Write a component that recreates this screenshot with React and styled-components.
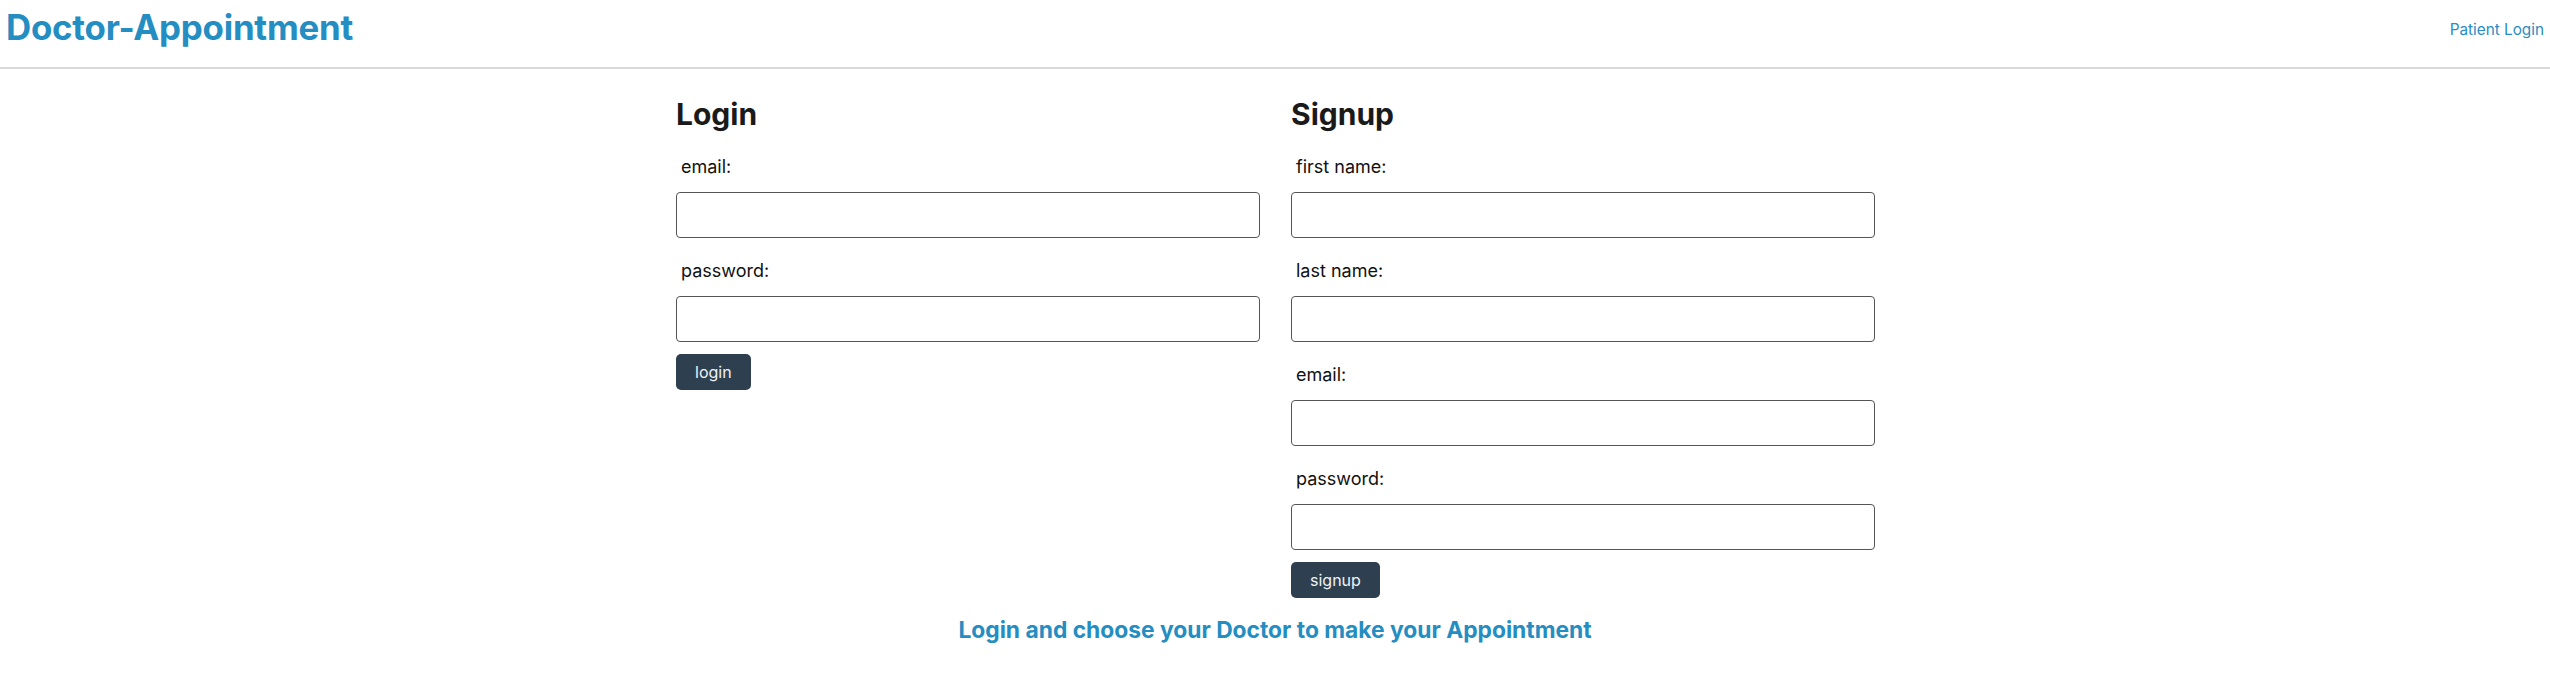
import styled, { createGlobalStyle } from "styled-components";

const GlobalStyle = createGlobalStyle`
    body{
        margin:0;
        font-family: Inter, "Noto Sans", sans-serif;
        color:#1b1b1b;
        background:#ffffff;
    }
    *{ box-sizing:border-box; }
`

const Header = styled.header`
    height:69px;
    display:flex;
    justify-content:space-between;
    align-items:flex-start;
    padding:0 6px 0 6px;
    border-bottom:2px solid #d9d9d9;
`

const Brand = styled.h1`
    margin:0;
    padding-top:7px;
    font-size:34.8px;
    line-height:40px;
    font-weight:700;
    color:#248dc1;
    letter-spacing:-0.2px;
`

const NavLink = styled.a`
    margin-top:20px;
    font-size:15.3px;
    line-height:20px;
    color:#2a8cc4;
    text-decoration:none;
    cursor:pointer;
`

const Main = styled.main`
    width:1230px;
    margin:0 auto;
    display:grid;
    grid-template-columns:1fr 1fr;
    padding-top:27px;
`

const Column = styled.section`
    padding-left:16px;
`

const Title = styled.h2`
    margin:0 0 24px;
    font-size:30px;
    line-height:36px;
    font-weight:700;
    color:#1a1a1a;
`

const Field = styled.div`
    margin-bottom:${props => props.last ? "12px" : "22px"};
`

const Label = styled.label`
    display:block;
    margin:0 0 14px 5px;
    font-size:18px;
    line-height:22px;
    color:#111;
`

const Input = styled.input`
    display:block;
    width:584px;
    height:46px;
    border:1px solid #555;
    border-radius:4px;
    padding:0 10px;
    font-size:16px;
    font-family:inherit;
    background:#fff;
`

const Button = styled.button`
    height:36px;
    padding:0 19px;
    border:none;
    border-radius:5px;
    background:#2e4050;
    color:#eef2f5;
    font-family:inherit;
    font-size:16px;
    cursor:pointer;
`

const Footer = styled.h3`
    margin:17px 0 0;
    text-align:center;
    font-size:22.8px;
    line-height:29px;
    font-weight:700;
    color:#248dc1;
`

function FormField({label, type, last}){
    return(
        <Field last={last}>
            <Label>{label}</Label>
            <Input type={type}/>
        </Field>
    )
}

export default function App(){
    return(
        <>
            <GlobalStyle/>
            <Header>
                <Brand>Doctor-Appointment</Brand>
                <NavLink>Patient Login</NavLink>
            </Header>
            <Main>
                <Column>
                    <Title>Login</Title>
                    <FormField label="email:" type="email"/>
                    <FormField label="password:" type="password" last/>
                    <Button>login</Button>
                </Column>
                <Column>
                    <Title>Signup</Title>
                    <FormField label="first name:" type="text"/>
                    <FormField label="last name:" type="text"/>
                    <FormField label="email:" type="email"/>
                    <FormField label="password:" type="password" last/>
                    <Button>signup</Button>
                </Column>
            </Main>
            <Footer>Login and choose your Doctor to make your Appointment</Footer>
        </>
    )
}
